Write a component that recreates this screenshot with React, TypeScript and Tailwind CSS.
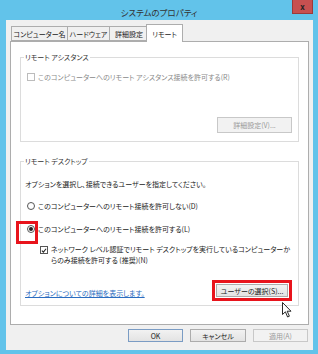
import React from 'react';

const font = "font-['Meiryo_UI','Noto_Sans_CJK_JP',sans-serif] [font-feature-settings:'palt']";

const Tab: React.FC<{ label: string; w: string; active?: boolean }> = ({ label, w, active }) =>
  active ? (
    <div className={`${w} h-[18px] -mb-px -ml-[2px] z-10 flex items-center justify-center border border-b-0 border-[#adadad] bg-white`}>
      {label}
    </div>
  ) : (
    <div className={`${w} h-[15px] mt-[3px] flex items-center justify-center border border-r-0 border-[#adadad] bg-[#f0f0f0] first:ml-px`}>
      {label}
    </div>
  );

const Btn: React.FC<{ label: string; className?: string; disabled?: boolean }> = ({ label, className = '', disabled }) => (
  <div
    className={`flex items-center justify-center border ${
      disabled ? 'border-[#c8c8c8] bg-[#f2f2f2] text-[#9a9a9a]' : 'border-[#acacac] bg-gradient-to-b from-[#f2f2f2] to-[#e3e3e3] text-[#222]'
    } ${className}`}
  >
    {label}
  </div>
);

const Radio: React.FC<{ checked?: boolean }> = ({ checked }) => (
  <span className="w-[8px] h-[8px] rounded-full border border-[#555] bg-white flex items-center justify-center shrink-0">
    {checked && <span className="w-[4px] h-[4px] rounded-full bg-[#222]" />}
  </span>
);

export default function App() {
  return (
    <div className={`w-[318px] h-[354px] bg-[#62c3ea] text-[7px] leading-[10px] text-[#222] ${font} relative overflow-hidden`}>
      {/* title bar */}
      <div className="h-[20px] grid grid-cols-[1fr_auto_1fr] items-center">
        <div />
        <div className="text-[8.5px] text-[#333] pt-[3px]">システムのプロパティ</div>
        <div className="flex justify-end self-start pr-[5px]">
          <div className="w-[21px] h-[14px] bg-[#c75050] flex items-center justify-center text-[8px] font-bold text-[#222] border border-[#9c3a3a] border-t-0">x</div>
        </div>
      </div>

      {/* body */}
      <div className="ml-[6px] mr-[5px] h-[330px] bg-[#f0f0f0] px-[4px] pt-[3px]">
        {/* tabs */}
        <div className="flex items-end">
          <Tab label="コンピューター名" w="w-[56px]" />
          <Tab label="ハードウェア" w="w-[42px]" />
          <Tab label="詳細設定" w="w-[39px] border-r" />
          <Tab label="リモート" w="w-[37px]" active />
        </div>

        {/* panel */}
        <div className="border border-[#adadad] bg-white h-[284px] px-[9px] pt-[10px]">
          <fieldset className="border border-[#dcdcdc] px-[6px] pb-[8px]">
            <legend className="ml-[-3px] px-[1px] text-[#333]">リモート アシスタンス</legend>
            <div className="mt-[10px] flex items-center gap-[3px] text-[#8a8a8a]">
              <span className="w-[8px] h-[8px] border border-[#bcbcbc] bg-white shrink-0" />
              このコンピューターへのリモート アシスタンス接続を許可する(R)
            </div>
            <div className="mt-[35px] flex justify-end">
              <Btn label="詳細設定(V)..." disabled className="w-[75px] h-[16px]" />
            </div>
          </fieldset>

          <fieldset className="mt-[14px] border border-[#dcdcdc] px-[6px] pb-[4px]">
            <legend className="ml-[-3px] px-[1px] text-[#333]">リモート デスクトップ</legend>
            <div className="mt-[13px] -ml-[2px]">オプションを選択し、接続できるユーザーを指定してください。</div>
            <div className="mt-[12px] flex items-center gap-[3px]">
              <Radio />
              このコンピューターへのリモート接続を許可しない(D)
            </div>
            <div className="mt-[13px] flex items-center gap-[3px] relative">
              <span className="absolute left-[-11px] top-[-3px] w-[22px] h-[23px] border-[3px] border-[#e8141c]" />
              <Radio checked />
              このコンピューターへのリモート接続を許可する(L)
            </div>
            <div className="mt-[10px] ml-[13px] flex items-start gap-[3px] leading-[11px]">
              <span className="mt-[2px] w-[8px] h-[8px] border border-[#555] bg-white shrink-0 flex items-center justify-center">
                <svg viewBox="0 0 8 8" className="w-[7px] h-[7px]">
                  <path d="M1.2 4.2 L3.2 6.2 L6.8 1.6" fill="none" stroke="#222" strokeWidth="1.4" />
                </svg>
              </span>
              <span className="whitespace-nowrap">
                ネットワーク レベル認証でリモート デスクトップを実行しているコンピューターか
                <br />
                らのみ接続を許可する (推奨)(N)
              </span>
            </div>
            <div className="mt-[14px] flex items-center justify-between">
              <span className="-ml-[2px] mt-[4px] text-[#2a6cc0] underline">オプションについての詳細を表示します。</span>
              <div className="border-[3px] border-[#e8141c] p-px">
                <Btn label="ユーザーの選択(S)..." className="w-[72px] h-[13px]" />
              </div>
            </div>
          </fieldset>
        </div>

        {/* dialog buttons */}
        <div className="mt-[4px] flex justify-end gap-[7px] pr-[1px]">
          <Btn label="OK" className="w-[55px] h-[13px] !border-[#7a9cc4]" />
          <Btn label="キャンセル" className="w-[56px] h-[13px]" />
          <Btn label="適用(A)" disabled className="w-[55px] h-[13px]" />
        </div>
      </div>

      {/* mouse cursor */}
      <svg viewBox="0 0 10 16" className="absolute left-[282px] top-[302px] w-[10px] h-[16px]">
        <path d="M0.5 0.5 L0.5 12.5 L3.4 9.8 L5.6 15 L7.4 14.2 L5.2 9.2 L9 9.2 Z" fill="#fff" stroke="#111" strokeWidth="0.9" strokeLinejoin="round" />
      </svg>
    </div>
  );
}
